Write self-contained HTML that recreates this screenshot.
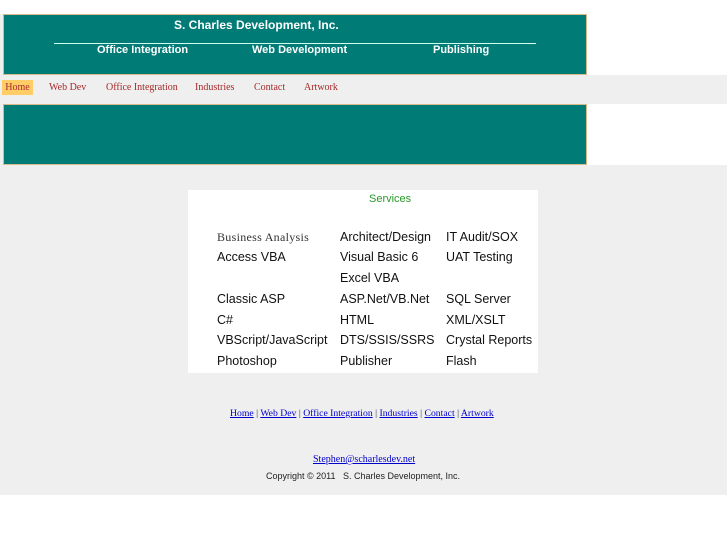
<!DOCTYPE html>
<html><head><style>
body{margin:0;width:727px;height:545px;background:#fff;position:relative;overflow:hidden;font-family:"Liberation Sans",sans-serif}
.grey{position:absolute;left:0;top:0;width:727px;height:495px;background:#efefef}
.wt{position:absolute;background:#fff}
.ban{position:absolute;left:3px;width:582px;background:#007b76;border:1px solid #d9b98a}
.h{position:absolute;color:#fff;font-weight:bold;font-size:12px;white-space:nowrap}
.nav{position:absolute;top:80px;height:15px;font-family:"Liberation Serif",serif;font-size:10px;color:#a52a2a;line-height:15px}
.svc{position:absolute;left:188px;top:190px;width:350px;height:183px;background:#fff}
.s{position:absolute;font-size:12.5px;color:#111;white-space:nowrap}
.f{position:absolute;font-family:"Liberation Serif",serif;font-size:9.8px;color:#00c;white-space:nowrap}
.f a{color:#00c;text-decoration:underline}
</style></head><body>
<div class="grey"></div>
<div class="wt" style="left:0;top:0;width:727px;height:14px"></div>
<div class="wt" style="left:587px;top:14px;width:140px;height:61px"></div>
<div class="wt" style="left:587px;top:104px;width:140px;height:61px"></div>
<div class="ban" style="top:14px;height:59px"></div>
<div class="h" style="left:174px;top:18px">S. Charles Development, Inc.</div>
<div style="position:absolute;left:54px;top:43px;width:482px;height:1px;background:#cfe"></div>
<div class="h" style="left:97px;top:44px;font-size:11px">Office Integration</div>
<div class="h" style="left:252px;top:44px;font-size:11px">Web Development</div>
<div class="h" style="left:433px;top:44px;font-size:11px">Publishing</div>
<div class="nav" style="left:2px;width:31px;background:#ffcc66;text-align:center">Home</div>
<div class="nav" style="left:49px">Web Dev</div>
<div class="nav" style="left:106px">Office Integration</div>
<div class="nav" style="left:195px">Industries</div>
<div class="nav" style="left:254px">Contact</div>
<div class="nav" style="left:304px">Artwork</div>
<div class="ban" style="top:104px;height:59px"></div>
<div class="svc">
<div style="position:absolute;left:181px;top:3px;color:#2a9a2a;font-size:11px">Services</div>
<div class="s" style="left:29px;top:40px;font-family:'Liberation Serif',serif;font-size:12px;color:#333;letter-spacing:0.3px">Business Analysis</div>
<div class="s" style="left:29px;top:60px">Access VBA</div>
<div class="s" style="left:29px;top:102px">Classic ASP</div>
<div class="s" style="left:29px;top:123px">C#</div>
<div class="s" style="left:29px;top:143px">VBScript/JavaScript</div>
<div class="s" style="left:29px;top:164px">Photoshop</div>
<div class="s" style="left:152px;top:40px">Architect/Design</div>
<div class="s" style="left:152px;top:60px">Visual Basic 6</div>
<div class="s" style="left:152px;top:81px">Excel VBA</div>
<div class="s" style="left:152px;top:102px">ASP.Net/VB.Net</div>
<div class="s" style="left:152px;top:123px">HTML</div>
<div class="s" style="left:152px;top:143px">DTS/SSIS/SSRS</div>
<div class="s" style="left:152px;top:164px">Publisher</div>
<div class="s" style="left:258px;top:40px">IT Audit/SOX</div>
<div class="s" style="left:258px;top:60px">UAT Testing</div>
<div class="s" style="left:258px;top:102px">SQL Server</div>
<div class="s" style="left:258px;top:123px">XML/XSLT</div>
<div class="s" style="left:258px;top:143px">Crystal Reports</div>
<div class="s" style="left:258px;top:164px">Flash</div>
</div>
<div class="f" style="left:230px;top:408px;font-size:9.7px"><a>Home</a> <span style="color:#333">|</span> <a>Web Dev</a> <span style="color:#333">|</span> <a>Office Integration</a> <span style="color:#333">|</span> <a>Industries</a> <span style="color:#333">|</span> <a>Contact</a> <span style="color:#333">|</span> <a>Artwork</a></div>
<div class="f" style="left:313px;top:454px;font-size:10px"><a>Stephen@scharlesdev.net</a></div>
<div style="position:absolute;left:266px;top:471px;font-size:9px;color:#222;white-space:pre">Copyright © 2011   S. Charles Development, Inc.</div>
</body></html>
